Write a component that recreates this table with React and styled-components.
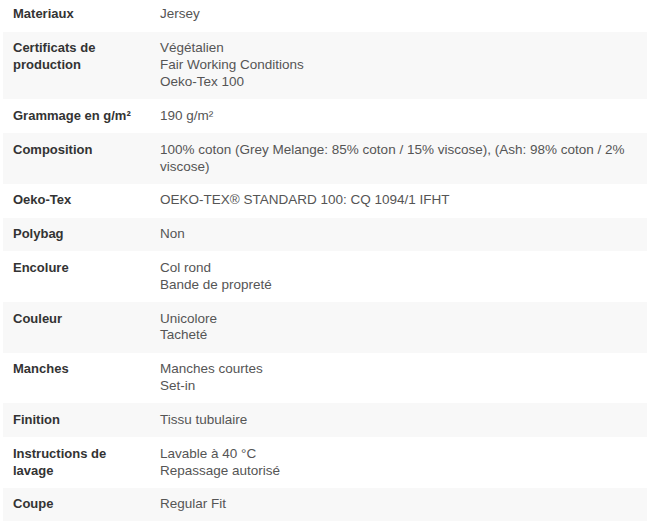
import styled, { createGlobalStyle } from "styled-components"

const Global = createGlobalStyle`
    body {
        margin: 0;
        background: #FFF;
        font-family: "Liberation Sans", Arial, sans-serif;
    }
`

const Wrap = styled.div`
    margin: -2px 0 0 3px;
    width: 644px;
`

const Table = styled.table`
    width: 100%;
    border-collapse: collapse;
    border-spacing: 0;
    font-size: 13px;
    line-height: 16.9px;
`

const Row = styled.tr`
    background-color: ${props => props.$grey ? '#F8F8F8' : '#FFF'};
`

const Label = styled.th`
    width: 127px;
    padding: 8.45px 10px;
    text-align: left;
    vertical-align: top;
    font-weight: bold;
    color: #333;
`

const Valeur = styled.td`
    padding: 8.45px 10px;
    vertical-align: top;
    font-size: 13.5px;
    color: #555;
`

const donnees = [
    ['Materiaux', ['Jersey']],
    ['Certificats de production', ['Végétalien', 'Fair Working Conditions', 'Oeko-Tex 100']],
    ['Grammage en g/m²', ['190 g/m²']],
    ['Composition', ['100% coton (Grey Melange: 85% coton / 15% viscose), (Ash: 98% coton / 2% viscose)']],
    ['Oeko-Tex', ['OEKO-TEX® STANDARD 100: CQ 1094/1 IFHT']],
    ['Polybag', ['Non']],
    ['Encolure', ['Col rond', 'Bande de propreté']],
    ['Couleur', ['Unicolore', 'Tacheté']],
    ['Manches', ['Manches courtes', 'Set-in']],
    ['Finition', ['Tissu tubulaire']],
    ['Instructions de lavage', ['Lavable à 40 °C', 'Repassage autorisé']],
    ['Coupe', ['Regular Fit']],
]

export default function App() {
    return (
        <>
            <Global />
            <Wrap>
                <Table>
                    <tbody>
                        {donnees.map(([label, valeurs], i) => (
                            <Row key={label} $grey={i % 2 === 1}>
                                <Label>{label}</Label>
                                <Valeur>
                                    {valeurs.map((v, j) => <div key={j}>{v}</div>)}
                                </Valeur>
                            </Row>
                        ))}
                    </tbody>
                </Table>
            </Wrap>
        </>
    )
}
